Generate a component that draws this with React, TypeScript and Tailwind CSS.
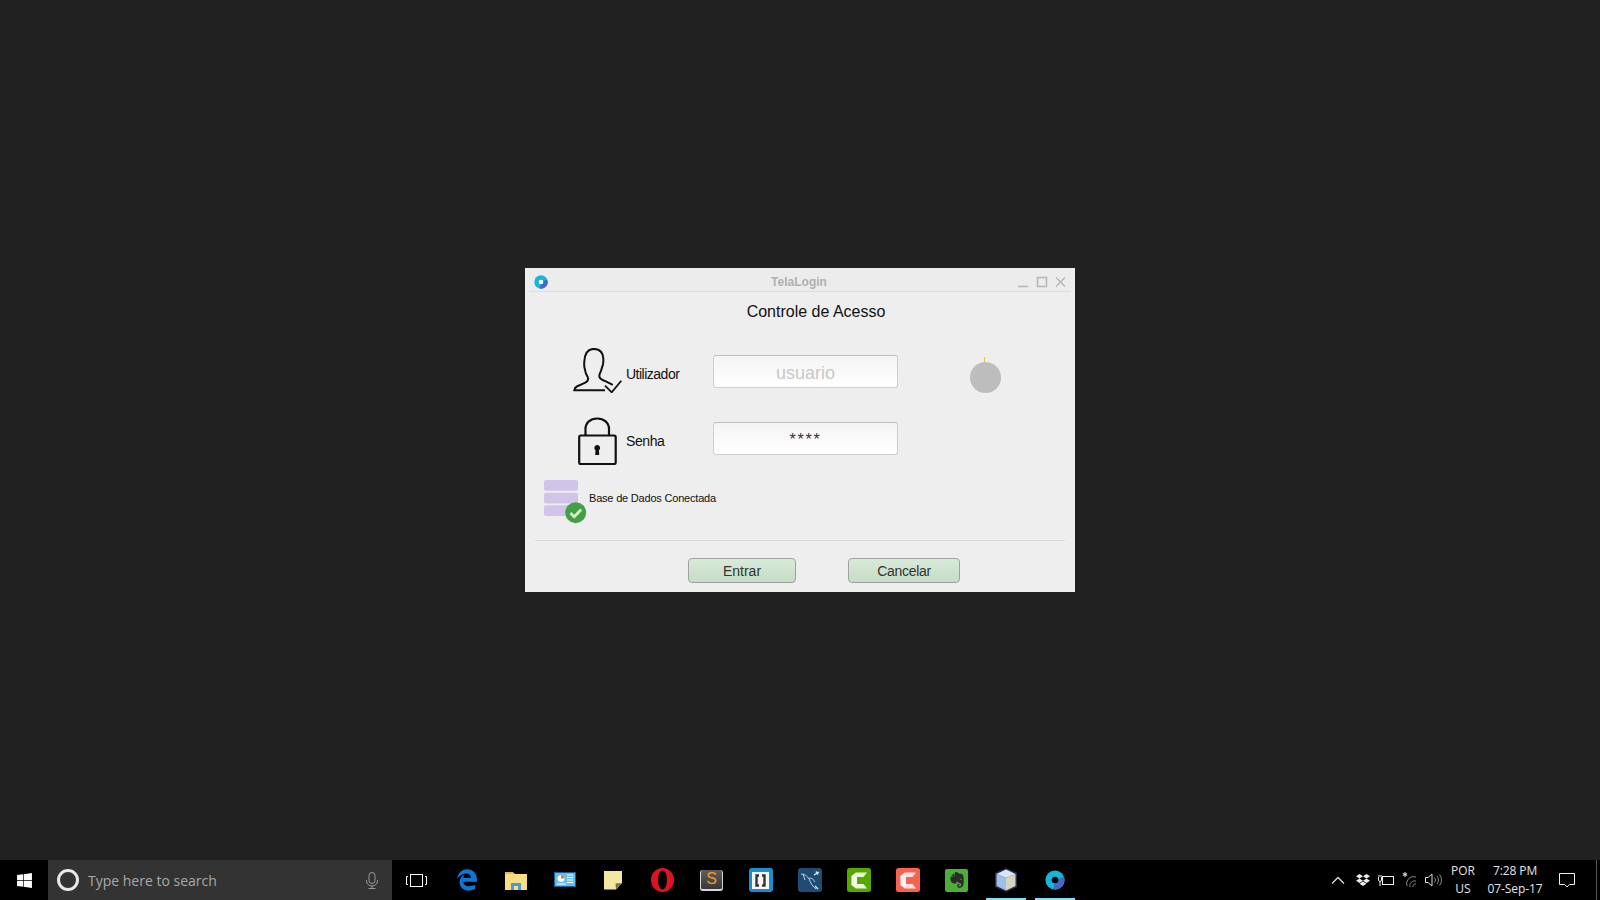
import { FaDropbox, FaEdgeLegacy, FaEvernote, FaWindows } from "react-icons/fa";

function AppLogo({ size = 24, hole = "#fff" }: { size?: number; hole?: string }) {
  return (
    <svg width={size} height={size} viewBox="0 0 24 24">
      <circle cx="12" cy="12" r="11.500" fill="#14b6da" />
      <path d="M12 12L22.800 8.070A11.500 11.500 0 0 1 10 23.300z" fill="#4668c8" />
      <circle cx="12" cy="12" r="4" fill={hole} />
    </svg>
  );
}

function UserCheckIcon() {
  return (
    <svg width="51" height="45" viewBox="0 0 51 45" fill="none" stroke="#111" strokeWidth="2" className="shrink-0">
      <path d="M32 42.300H1.300c.3-2 1-3 2.500-3.800l8-3.600c2.600-1.200 3.500-2.600 3.300-4.600-.2-1.500-1.700-3.200-2.400-5.500-.4-1.400-.4-2.600-1-4.200-.7-1.800-.6-4.300-.4-7C11.800 4.500 15 .9 20.700.9 26.500.9 30 4.500 30.300 10.500c.1 2.800.2 4.700-.5 6.600-.6 1.500-1 3-1.500 4.800-.5 2-2 3.500-2 6 0 2.500 2 3.700 5 4.800l8.500 4.200" />
      <path d="M32 37.700l6.700 6.600 9.600-11.600" strokeWidth="1.800" />
    </svg>
  );
}

function LockIcon() {
  return (
    <svg width="41" height="48" viewBox="0 0 41 48" fill="none" stroke="#111" strokeWidth="2.200" className="shrink-0">
      <path d="M8.500 18v-6C8.500 5.500 13.500 1.500 20.200 1.500S32 5.500 32 12v6" />
      <rect x="2.200" y="18.500" width="36.500" height="28.500" rx="1.500" />
      <path d="M20.200 28a3 3 0 0 1 1.700 5.400l.3 4.600h-4l.3-4.600a3 3 0 0 1 1.700-5.400z" fill="#111" stroke="none" />
    </svg>
  );
}

function DatabaseOkIcon() {
  return (
    <svg width="43" height="44" viewBox="0 0 43 44" className="shrink-0">
      <rect x="0" y="0" width="34" height="10.700" rx="2" fill="#d1c4e9" />
      <rect x="0" y="12.700" width="34" height="10.700" rx="2" fill="#d1c4e9" />
      <rect x="0" y="25.300" width="34" height="10.700" rx="2" fill="#d1c4e9" />
      <circle cx="31.700" cy="32.700" r="10.500" fill="#43a047" />
      <path d="M26.500 33l3.700 3.700 7-7.200" fill="none" stroke="#dcedc8" strokeWidth="2.800" />
    </svg>
  );
}

function SublimeIcon() {
  return (
    <div className="w-[23px] h-[21px] rounded-[3px] bg-gradient-to-b from-[#5e5e5e] to-[#383838] border-x border-b-2 border-[#d8d8d8] flex items-center justify-center">
      <span className="text-[#f59a23] text-[16px] leading-none font-['Liberation_Sans',sans-serif]">S</span>
    </div>
  );
}

function OperaIcon() {
  return (
    <svg width="23" height="24" viewBox="0 0 23 24">
      <ellipse cx="11.500" cy="12" rx="11.500" ry="12" fill="#d9161f" />
      <ellipse cx="11.500" cy="12" rx="4.500" ry="9.500" fill="#000" />
    </svg>
  );
}

function FolderIcon() {
  return (
    <svg width="22" height="19" viewBox="0 0 22 19">
      <path d="M0 1h8l2 2h12v3H0z" fill="#e8b93f" />
      <rect y="3" width="22" height="16" fill="#fcdc83" />
      <path d="M6 12h10v7h-3v-4H9v4H6z" fill="#3aa0e0" />
    </svg>
  );
}

function ControlPanelIcon() {
  return (
    <svg width="22" height="16" viewBox="0 0 22 16">
      <rect width="22" height="15" fill="#1a5f90" />
      <rect x="1" y="1" width="20" height="13" fill="#62bdf0" />
      <circle cx="7" cy="6.500" r="3.500" fill="#fff" />
      <path d="M7 6.500V3a3.500 3.500 0 0 1 3.500 3.500z" fill="#ef7d22" />
      <path d="M13 3h6M13 5.500h6M13 8h6M13 10.500h6M3 12h9" stroke="#fff" strokeWidth="1" />
    </svg>
  );
}

function NoteIcon() {
  return (
    <svg width="19" height="19" viewBox="0 0 19 19">
      <path d="M0 0h18v12l-6 6.500H0z" fill="#f2e8a0" />
      <path d="M18 12l-6 6.500-.5-6z" fill="#77724a" />
    </svg>
  );
}

function WrapperIcon() {
  return (
    <div className="w-[24px] h-[24px] rounded-[3px] bg-[#1a8fd0] flex items-center justify-center">
      <svg width="17" height="17" viewBox="0 0 17 17" fill="none">
        <rect width="17" height="17" fill="#f4f4f4" />
        <path d="M7 3.500H4.500v10H7M10 3.500h2.500v10H10" stroke="#333" strokeWidth="2.400" />
      </svg>
    </div>
  );
}

function WorkbenchIcon() {
  return (
    <svg width="24" height="24" viewBox="0 0 24 24" fill="none">
      <rect width="24" height="24" rx="3" fill="#1f4c73" />
      <path d="M3 6c4 0 6 2 8 5 2 4 3 7 7 10M5 6l2 6M11 10c3 0 5 2 6 4" stroke="#b8cfe0" strokeWidth="1" />
      <path d="M16 7l5-3M18 3.500l2 3M17 18l3 3" stroke="#dfe9f0" strokeWidth="1.400" />
    </svg>
  );
}

function CamtasiaIcon({ bg, light }: { bg: string; light: string }) {
  return (
    <svg width="24" height="24" viewBox="0 0 24 24">
      <rect width="24" height="24" rx="2.500" fill={bg} />
      <path d="M4.500 8L9 4.500h11L16.500 9H10v7h6.500l3.500 4.500H9L4.500 17z" fill={light} />
      <path d="M4.500 8L9 4.500 10 9v7l-1 4.500L4.500 17z" fill="#fff" opacity=".55" />
    </svg>
  );
}

function EvernoteIcon() {
  return (
    <div className="w-[23px] h-[23px] rounded-[2px] bg-[#4caf3a] flex items-center justify-center text-[#2b2b2b]">
      <FaEvernote size={18} />
    </div>
  );
}

function CubeIcon() {
  return (
    <svg width="24" height="26" viewBox="0 0 24 26">
      <path d="M12 1l11 5v14l-11 5-11-5V6z" fill="#2b2f55" />
      <path d="M12 2.500l9.500 4.500L12 11 2.500 7z" fill="#d5e9f5" />
      <path d="M2.500 7L12 11v12.500L2.500 19z" fill="#9cc0e8" />
      <path d="M21.500 7L12 11v12.500l9.500-4.500z" fill="#d8d4bc" />
    </svg>
  );
}

function TaskButton({ children, active }: { children: React.ReactNode; active?: boolean }) {
  return (
    <div className="w-[49px] h-full flex items-center justify-center relative">
      {children}
      {active && <div className="absolute bottom-0 left-[5px] w-[40px] h-[2px] bg-[#7fe3f8]" />}
    </div>
  );
}

function Taskbar() {
  return (
    <div className="h-[40px] bg-black flex items-center shrink-0 font-['Open_Sans',sans-serif]">
      <div className="w-[48px] h-full flex items-center justify-center text-white">
        <FaWindows size={17} />
      </div>
      <div className="w-[344px] h-full bg-[#333333] flex items-center pl-[9px] pr-[13px]">
        <div className="w-[22px] h-[22px] rounded-full border-[3px] border-[#e8e8e8]" />
        <span className="ml-[9px] text-[14px] text-[#a8a8a8] flex-1">Type here to search</span>
        <svg width="14" height="17" viewBox="0 0 14 17" fill="none" stroke="#9a9a9a" strokeWidth="1">
          <rect x="4" y="0.500" width="6" height="11" rx="3" />
          <path d="M1.500 8v1a5.500 5 0 0 0 11 0V8M7 14v2.500M3.500 16.500h7" />
        </svg>
      </div>
      <div className="w-[48px] h-full flex items-center justify-center">
        <svg width="21" height="13" viewBox="0 0 21 13" fill="none" stroke="#fff" strokeWidth="1">
          <rect x="4.500" y="0.500" width="12" height="12" />
          <path d="M2 2.500H.5v8H2M19 2.500h1.500v8H19" />
        </svg>
      </div>
      <div className="flex h-full ml-[2px]">
        <TaskButton>
          <div className="text-[#0a78d7]"><FaEdgeLegacy size={22} /></div>
        </TaskButton>
        <TaskButton><FolderIcon /></TaskButton>
        <TaskButton><ControlPanelIcon /></TaskButton>
        <TaskButton><NoteIcon /></TaskButton>
        <TaskButton><OperaIcon /></TaskButton>
        <TaskButton><SublimeIcon /></TaskButton>
        <TaskButton><WrapperIcon /></TaskButton>
        <TaskButton><WorkbenchIcon /></TaskButton>
        <TaskButton><CamtasiaIcon bg="#55a800" light="#eaf6d8" /></TaskButton>
        <TaskButton><CamtasiaIcon bg="#f9624f" light="#fde3df" /></TaskButton>
        <TaskButton><EvernoteIcon /></TaskButton>
        <TaskButton active><CubeIcon /></TaskButton>
        <TaskButton active><AppLogo size={20} hole="#000" /></TaskButton>
      </div>

      <div className="ml-auto flex items-center h-full text-white">
        <svg width="14" height="8" viewBox="0 0 14 8" fill="none" stroke="#ddd" strokeWidth="1.300">
          <path d="M1 7.500l6-6 6 6" />
        </svg>
        <div className="ml-[11px] text-[#eee]"><FaDropbox size={14} /></div>
        <svg width="16" height="12" viewBox="0 0 16 12" fill="none" stroke="#eee" strokeWidth="1" className="ml-[8px]">
          <rect x="4.500" y="2.500" width="11" height="8" />
          <path d="M.5 3v3a1.500 1.500 0 0 0 3 0V3M2 8v4M1 1v2M3 1v2" />
        </svg>
        <svg width="18" height="17" viewBox="0 0 18 17" fill="none" stroke="#888" strokeWidth="1" className="ml-[8px]">
          <path d="M5 14a7 7 0 0 1 9-9M8 15a5 5 0 0 1 6-6M11 15a2.500 2.500 0 0 1 3-3" />
          <path d="M3 0v5M.8 1.500l4.400 2M5.200 1.500L.8 3.500" stroke="#eee" />
        </svg>
        <svg width="17" height="14" viewBox="0 0 17 14" fill="none" stroke="#ddd" strokeWidth="1" className="ml-[5px]">
          <path d="M.5 4.500h2.500L7 1v12L3 9.500H.5z" />
          <path d="M9.500 4.500a3.500 3.500 0 0 1 0 5M12 3a6 6 0 0 1 0 8M14.500 1.500a8.500 8.500 0 0 1 0 11" stroke="#888" />
        </svg>
        <div className="w-[30px] ml-[6px] text-[12px] leading-[18px] text-center text-[#e4e4e4]">
          <div>POR</div>
          <div>US</div>
        </div>
        <div className="w-[66px] ml-[4px] text-[12px] leading-[18px] text-center text-[#e4e4e4] tracking-[-0.1px]">
          <div>7:28 PM</div>
          <div>07-Sep-17</div>
        </div>
        <svg width="16" height="16" viewBox="0 0 16 16" fill="none" stroke="#eee" strokeWidth="1" className="ml-[11px]">
          <path d="M.5 1.500h15v11h-5L8 15l-2.500-2.500h-5z" />
        </svg>
        <div className="w-px h-full bg-[#555] ml-[21px] mr-[3px]" />
      </div>
    </div>
  );
}

function LoginWindow() {
  return (
    <div className="w-[550px] h-[324px] bg-[#eeeeee] font-['Liberation_Sans',sans-serif] flex flex-col">
      <div className="h-[24px] mx-[4px] border-b border-[#dcdcdc] bg-[#ececec] flex items-center pt-[4px] pl-[5px] pr-[5px] shrink-0">
        <AppLogo size={14} hole="#fff" />
        <span className="flex-1 text-center text-[12px] font-bold text-[#b0b0b0] pl-[32px]">TelaLogin</span>
        <svg width="48" height="12" viewBox="0 0 48 12" fill="none" stroke="#b4b4b4" strokeWidth="1.200">
          <path d="M0 10.500h10" strokeWidth="1.400" />
          <rect x="19.500" y="1.500" width="9" height="9" strokeWidth="1.500" />
          <path d="M38 1.500l9 9M47 1.500l-9 9" />
        </svg>
      </div>

      <div className="text-center text-[16px] leading-[20px] text-[#111] mt-[10px] ml-[32px]">Controle de Acesso</div>

      <div className="flex items-start mt-[26px] h-[45px]">
        <div className="ml-[48px]"><UserCheckIcon /></div>
        <span className="ml-[2px] w-[87px] text-[14px] tracking-[-0.5px] leading-[18px] mt-[17px] text-[#111]">Utilizador</span>
        <input
          readOnly
          placeholder="usuario"
          className="mt-[7px] w-[185px] h-[33px] rounded-[3px] border border-[#cfcfcf] border-t-[#bdbdbd] bg-gradient-to-b from-[#f4f4f4] to-white text-center text-[18px] pt-[4px] placeholder:text-[#c8c8c8] outline-none"
        />
        <div className="ml-[72px] mt-[9px] flex flex-col items-center">
          <div className="w-px h-[5px] bg-[#f5c518] -ml-[2px]" />
          <div className="w-[31px] h-[31px] rounded-full bg-[#bdbdbd]" />
        </div>
      </div>

      <div className="flex items-start mt-[24px] h-[48px]">
        <div className="ml-[52px]"><LockIcon /></div>
        <span className="ml-[8px] w-[87px] text-[14px] tracking-[-0.4px] leading-[18px] mt-[15px] text-[#111]">Senha</span>
        <input
          readOnly
          value="****"
          className="mt-[5px] w-[185px] h-[33px] rounded-[3px] border border-[#cfcfcf] border-t-[#bdbdbd] bg-gradient-to-b from-[#f4f4f4] to-white text-center text-[16px] tracking-[1.8px] pt-[2px] text-[#333] outline-none"
        />
      </div>

      <div className="flex items-start mt-[15px] ml-[19px] h-[44px]">
        <DatabaseOkIcon />
        <span className="ml-[2px] mt-[10px] text-[11px] tracking-[-0.2px] leading-[16px] text-[#111]">Base de Dados Conectada</span>
      </div>

      <div className="mt-[16px] mx-[10px] border-t border-[#dcdcdc]" />

      <div className="flex mt-[17px] ml-[163px]">
        <button className="w-[108px] h-[25px] pt-[1px] rounded-[4px] border border-[#a0a0a0] bg-gradient-to-b from-[#d9ead9] to-[#c4dcc4] text-[14px] text-[#333]">
          Entrar
        </button>
        <button className="ml-[52px] w-[112px] h-[25px] pt-[1px] rounded-[4px] border border-[#a0a0a0] bg-gradient-to-b from-[#d9ead9] to-[#c4dcc4] text-[14px] tracking-[-0.3px] text-[#333]">
          Cancelar
        </button>
      </div>
    </div>
  );
}

export default function App() {
  return (
    <div className="w-[1600px] h-[900px] bg-[#212121] flex flex-col overflow-hidden">
      <div className="flex-1 flex items-center justify-center">
        <LoginWindow />
      </div>
      <Taskbar />
    </div>
  );
}
